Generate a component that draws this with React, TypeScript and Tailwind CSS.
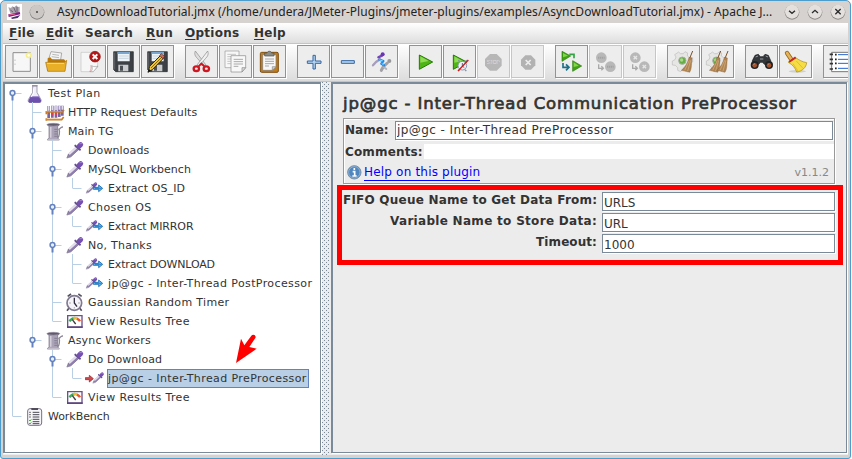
import React from "react";

/* ---------- toolbar drawings (99-unit canvas, three units per pixel) ---------- */

const NewIcon = () => (
  <g>
    <path d="M24 23h52v56H24z" fill="#f7f7f7" stroke="#8c8c8c" strokeWidth="3" />
    <path d="M30 44v3M30 56v3" stroke="#aaa" strokeWidth="3" />
    <circle cx="71" cy="31" r="9" fill="#f6ee8a" />
    <circle cx="71" cy="31" r="4" fill="#fffef0" />
  </g>
);

const OpenIcon = () => (
  <g>
    <path d="M29 42L36 20l32 4-4 26z" fill="#f4f4f4" stroke="#8a8a8a" strokeWidth="2" />
    <path d="M40 28l20 3M38 35l22 3" stroke="#9a9a9a" strokeWidth="2" />
    <path d="M26 40l8-3 5 6h36l5 6-4 28H25z" fill="#b9790c" />
    <path d="M20 52h56l7-6-5 33H26z" fill="#e9b027" stroke="#a86e0b" strokeWidth="2" />
    <path d="M24 55h51" stroke="#f8dc7e" strokeWidth="3" />
  </g>
);

const CloseIcon = () => (
  <g>
    <path d="M24 22h50v44L61 80H24z" fill="#f6f6f6" stroke="#c3c3c3" strokeWidth="2" />
    <path d="M52 80c8-4 6-13 4-18 7 5 14 3 19 1L61 80z" fill="#fff" stroke="#999" strokeWidth="2" />
    <path d="M50 80c5-7 5-14 3-19" fill="none" stroke="#a22" strokeWidth="1" />
    <circle cx="66" cy="35" r="16" fill="#b51717" stroke="#8d0e0e" strokeWidth="2" />
    <path d="M59 28l14 14M73 28L59 42" stroke="#fff" strokeWidth="6" />
  </g>
);

const Floppy = () => (
  <g>
    <path d="M20 20h59v60H26l-6-6z" fill="#3d4044" stroke="#232528" strokeWidth="2" />
    <path d="M32 21h36v28H32z" fill="#eef3f7" />
    <path d="M32 21h36v6H32z" fill="#79a7d0" />
    <path d="M35 33h30M35 40h30" stroke="#b5c5d2" strokeWidth="2" />
    <path d="M34 59h30v20H34z" fill="#c9cbcd" />
    <path d="M39 62h9v15h-9z" fill="#4a4e52" />
    <path d="M23 23v50" stroke="#73777b" strokeWidth="2" />
  </g>
);

const SaveAsIcon = () => (
  <g>
    <Floppy />
    <path d="M21 82l5-18 34-34 9 8-34 35z" fill="#f0c436" stroke="#2b2b1f" strokeWidth="3" />
    <path d="M30 69l34-34" stroke="#8a6b0d" strokeWidth="3" />
    <path d="M56 31l5-5 10 9-6 6z" fill="#d46c61" stroke="#4b1d19" strokeWidth="2" />
    <path d="M20 82l4-10 6 5z" fill="#111" />
  </g>
);

const CutIcon = () => (
  <g fill="none">
    <path d="M31 18c-4 10 0 16 6 22l21 24 5-4z" fill="#dedede" stroke="#8a8a8a" strokeWidth="2" />
    <path d="M68 18c4 10 0 16-6 22L41 64l-5-4z" fill="#f1f1f1" stroke="#8a8a8a" strokeWidth="2" />
    <ellipse cx="34" cy="71" rx="8" ry="7" stroke="#cf1722" strokeWidth="7" />
    <ellipse cx="64" cy="71" rx="8" ry="7" stroke="#cf1722" strokeWidth="7" />
    <path d="M41 64l8-8 9 8" stroke="#cf1722" strokeWidth="6" />
  </g>
);

const CopyIcon = () => (
  <g stroke="#999" strokeWidth="2" fill="#f8f8f8">
    <path d="M18 18h42v50H18z" />
    <path d="M25 28h26M25 35h20M25 42h12M25 49h10M25 56h10" stroke="#c4c4c4" strokeWidth="3" />
    <path d="M36 32h44v36L69 81H36z" stroke="#888" />
    <path d="M44 43h28M44 50h28M44 57h28M44 64h14" stroke="#aaa" strokeWidth="3" />
    <path d="M80 68H69v13z" fill="#ddd" stroke="#888" />
  </g>
);

const PasteIcon = () => (
  <g>
    <rect x="22" y="22" width="54" height="60" rx="4" fill="#bf7d1d" stroke="#81500f" strokeWidth="3" />
    <path d="M29 29h40v36L58 76H29z" fill="#f8f8f8" stroke="#777" strokeWidth="2" />
    <path d="M36 42h27M36 49h27M36 56h27M36 63h12" stroke="#a8a8a8" strokeWidth="3" />
    <path d="M69 65H58v11z" fill="#d3d3d3" stroke="#888" strokeWidth="2" />
    <path d="M35 33v-9h7c2-7 12-7 14 0h7v9z" fill="#898c87" stroke="#4e504c" strokeWidth="2" />
  </g>
);

const PlusIcon = () => (
  <path d="M48 31h7v17h17v7H55v17h-7V55H31v-7h17z" fill="#b3d2ee" stroke="#3465a4" strokeWidth="3" />
);

const MinusIcon = () => <path d="M31 47h39v8H31z" fill="#b3d2ee" stroke="#3465a4" strokeWidth="3" />;

const ToggleIcon = () => (
  <g strokeLinecap="round" strokeLinejoin="round" fill="none">
    <path d="M49 76l6-11 12-11" stroke="#a1a1a5" strokeWidth="9" />
    <path d="M56 66l8 6" stroke="#b4b4b8" strokeWidth="6" />
    <circle cx="73" cy="48" r="6" fill="#98989c" />
    <path d="M24 61l9-10 12-8" stroke="#a79dbd" strokeWidth="7" />
    <path d="M40 37l12-6" stroke="#7747b8" strokeWidth="7" />
    <circle cx="53" cy="28" r="6" fill="#6a35b4" />
    <path d="M43 44l12 4-6 8 8 5" stroke="#1d8aee" strokeWidth="7" />
    <path d="M44 45l8 2M51 56l4 3" stroke="#8cddff" strokeWidth="3" />
  </g>
);

const PlayShape = () => (
  <g>
    <path d="M31 30l40 21-40 22z" fill="#4fb416" stroke="#257808" strokeWidth="3" strokeLinejoin="round" />
    <path d="M34 34l25 14-25 5z" fill="#8edb54" />
  </g>
);

const PlayNoTimerIcon = () => (
  <g>
    <PlayShape />
    <circle cx="58" cy="62" r="13" fill="#f0f4fa" stroke="#8795ad" strokeWidth="3" />
    <path d="M50 50l-4-4M67 50l4-4M49 74l-3 4M66 74l4 4" stroke="#8090a8" strokeWidth="4" />
    <path d="M58 54v9l6 5" fill="none" stroke="#667" strokeWidth="3" />
    <path d="M45 78l31-33" stroke="#d01818" strokeWidth="4" />
  </g>
);

const StopIcon = () => (
  <g>
    <path d="M39 27h20l15 15v20L59 77H39L24 62V42z" fill="#b7b7b7" />
    <text x="49" y="58" textAnchor="middle" fontSize="17" fontWeight="bold" fill="#e0e0e0" stroke="#999" strokeWidth=".5" fontFamily="Liberation Sans, sans-serif" textLength="40">STOP</text>
  </g>
);

const ShutdownIcon = () => (
  <g>
    <path d="M43 31h17l13 13v17L60 74H43L30 61V44z" fill="#b2b2b2" />
    <path d="M44 45l15 15M59 45L44 60" stroke="#ececec" strokeWidth="5" />
  </g>
);

const RemoteStartIcon = () => (
  <g>
    <path d="M21 19l26 14-26 16z" fill="#3fa414" stroke="#257808" strokeWidth="2" />
    <path d="M24 24l15 8-15 5z" fill="#83d64a" />
    <path d="M53 47l27 16-27 16z" fill="#3fa414" stroke="#257808" strokeWidth="2" />
    <path d="M56 52l15 10-15 4z" fill="#83d64a" />
    <path d="M24 54v13h16M33 58l9 9-9 9" fill="none" stroke="#1d7187" strokeWidth="5" />
    <path d="M43 28h14v12" fill="none" stroke="#32a344" strokeWidth="5" />
  </g>
);

const RemoteDots = ({ cross }: { cross?: boolean }) => (
  <g>
    <circle cx="37" cy="38" r="16" fill="#b8b8b8" />
    <circle cx="64" cy="65" r="16" fill="#b8b8b8" />
    {cross ? (
      <path d="M32 33l10 10M42 33L32 43M59 60l10 10M69 60L59 70" stroke="#e6e6e6" strokeWidth="4" />
    ) : (
      <path d="M27 38h20M54 65h20" stroke="#a2a2a2" strokeWidth="6" strokeDasharray="4 2" />
    )}
    <path d="M29 58v12h14M37 64l6 6-6 6" fill="none" stroke="#a9a9a9" strokeWidth="4" />
  </g>
);

const Gear = () => (
  <g>
    <path d="M35 21l5 5h9l5-6 8 4-1 9 7 5h9v13l-8 3-2 9 4 8-9 7-8-5-8 1-5 6-9-4v-8l-7-7-9-1V48l8-4 3-8-4-7z" fill="#e6e6e4" stroke="#bbb" strokeWidth="2" />
    <circle cx="46" cy="47" r="11" fill="#67ad45" stroke="#aaa" strokeWidth="3" />
    <circle cx="44" cy="45" r="5" fill="#a9da8c" />
  </g>
);

const Broom = () => (
  <g>
    <path d="M77 18L68 40" stroke="#7a4e22" strokeWidth="3" />
    <path d="M66 37l9 2c-2 15 0 33-7 43l-25-6c12-10 19-22 23-39z" fill="#b08352" stroke="#7c5327" strokeWidth="1" />
    <path d="M67 46L53 76M71 46L62 78" stroke="#d8b483" strokeWidth="2" />
  </g>
);

const ClearIcon = () => (
  <g>
    <Gear />
    <Broom />
  </g>
);

const ClearAllIcon = () => (
  <g>
    <Gear />
    <g transform="translate(-18 0)">
      <Broom />
    </g>
    <g transform="translate(4 0)">
      <Broom />
    </g>
  </g>
);

const SearchIcon = () => (
  <g>
    <path d="M30 31l10-3 6 7h8l6-7 10 3 8 18-16 12-10-9h-5l-10 9-16-12z" fill="#34373a" stroke="#1c1e20" strokeWidth="2" />
    <circle cx="29" cy="60" r="12" fill="#202224" />
    <circle cx="72" cy="60" r="12" fill="#202224" />
    <circle cx="29" cy="61" r="7" fill="#a5522d" />
    <circle cx="72" cy="61" r="7" fill="#a5522d" />
    <path d="M32 36l7-3M62 33l7 3M45 42h10" stroke="#989da2" strokeWidth="3" />
    <path d="M25 59l5-3M68 59l5-3" stroke="#e4a27d" strokeWidth="2" />
  </g>
);

const ResetSearchIcon = () => (
  <g>
    <ellipse cx="55" cy="79" rx="26" ry="4" fill="#cfcfcf" />
    <path d="M24 24l12 18" stroke="#9c6614" strokeWidth="13" strokeLinecap="round" />
    <path d="M24 24l12 18" stroke="#e2b45b" strokeWidth="8" strokeLinecap="round" />
    <path d="M28 52l22-14c10 7 20 13 33 15-1 13-13 26-30 28-4-12-12-22-25-29z" fill="#f6dd45" stroke="#a78509" strokeWidth="2" />
    <path d="M42 56l15 22M52 48l20 22" stroke="#d4b01c" strokeWidth="2" />
    <path d="M30 51l20-14" stroke="#c92323" strokeWidth="6" />
  </g>
);

const FunctionIcon = () => (
  <g>
    <path d="M26 22h75v58H26z" fill="#fff" stroke="#777" strokeWidth="3" />
    <path d="M20 28h10M20 43h10M20 56h10M20 72h10" stroke="#333" strokeWidth="5" />
    <path d="M36 29h5M36 43h5M36 55h5M36 70h5" stroke="#222" strokeWidth="5" />
    <path d="M45 29h40M45 43h40M45 55h40M45 70h40" stroke="#2564cf" strokeWidth="3" />
  </g>
);

type Tool = { icon: React.ReactNode; label: string; disabled?: boolean };

const toolGroups: Tool[][] = [
  [
    { icon: <NewIcon />, label: "New" },
    { icon: <OpenIcon />, label: "Open" },
    { icon: <CloseIcon />, label: "Close" },
    { icon: <Floppy />, label: "Save" },
    { icon: <SaveAsIcon />, label: "Save As" },
  ],
  [
    { icon: <CutIcon />, label: "Cut" },
    { icon: <CopyIcon />, label: "Copy" },
    { icon: <PasteIcon />, label: "Paste" },
  ],
  [
    { icon: <PlusIcon />, label: "Expand All" },
    { icon: <MinusIcon />, label: "Collapse All" },
    { icon: <ToggleIcon />, label: "Toggle" },
  ],
  [
    { icon: <PlayShape />, label: "Start" },
    { icon: <PlayNoTimerIcon />, label: "Start no pauses" },
    { icon: <StopIcon />, label: "Stop", disabled: true },
    { icon: <ShutdownIcon />, label: "Shutdown", disabled: true },
  ],
  [
    { icon: <RemoteStartIcon />, label: "Remote Start All" },
    { icon: <RemoteDots />, label: "Remote Stop All", disabled: true },
    { icon: <RemoteDots cross />, label: "Remote Shutdown All", disabled: true },
  ],
  [
    { icon: <ClearIcon />, label: "Clear" },
    { icon: <ClearAllIcon />, label: "Clear All" },
  ],
  [
    { icon: <SearchIcon />, label: "Search" },
    { icon: <ResetSearchIcon />, label: "Reset Search" },
  ],
  [{ icon: <FunctionIcon />, label: "Function Helper" }],
];

const ToolButton = ({ icon, label, disabled }: Tool) => (
  <button
    aria-label={label}
    disabled={disabled}
    className={`h-[33px] w-[33px] shrink-0 border bg-[#ededed] shadow-[1px_1px_0_#fff] ${disabled ? "border-[#c6c6c6]" : "border-[#929292]"}`}
  >
    <svg className="block h-[31px] w-[31px]" viewBox="3 3 93 93">
      {icon}
    </svg>
  </button>
);

/* ---------- tree drawings (60 x 57 units) ---------- */

const FlaskIcon = () => (
  <g>
    <path d="M23 6h13v19l12 22c2 5-1 9-5 9H15c-4 0-7-4-5-9l13-22z" fill="#efedf6" stroke="#77718a" strokeWidth="2" />
    <path d="M17 37h24l7 12c1 4-2 7-5 7H15c-4 0-6-4-4-8z" fill="#6d4fae" />
    <path d="M16 38h26" stroke="#a994d6" strokeWidth="3" />
    <path d="M21 5h17" stroke="#9791a8" strokeWidth="4" />
    <path d="M26 13v14l-7 12" stroke="#fff" strokeWidth="3" fill="none" />
  </g>
);

const RackIcon = () => (
  <g>
    <path d="M11 9v36M22 8v36M33 8v36M43 8v34M52 8v30" stroke="#7764a2" strokeWidth="8" />
    <path d="M11 9v14M22 8v14M33 8v14M43 8v12M52 8v12" stroke="#e2deee" strokeWidth="5" />
    <path d="M22 24v14M33 24v14" stroke="#dc3c68" strokeWidth="6" />
    <path d="M2 27h50l5-6M2 50h48l6-8M4 24v10M4 46v7" stroke="#c97a23" strokeWidth="5" fill="none" />
    <path d="M3 25h48M3 48h46" stroke="#efb66a" strokeWidth="1.5" />
  </g>
);

const MugIcon = () => (
  <g>
    <path d="M41 20c5 8 1 26-3 28M42 22c5-1 4-8 12-7" fill="none" stroke="#8e8798" strokeWidth="4" />
    <path d="M8 8l4 6v33l-5 7h36l-5-7V14l4-6z" fill="#aaa2b6" stroke="#6f687b" strokeWidth="2" />
    <path d="M17 15v32" stroke="#d5cfdd" strokeWidth="5" />
    <path d="M28 22h9M28 29h9M28 36h9M28 43h9" stroke="#736b80" strokeWidth="2" />
    <ellipse cx="25" cy="8" rx="19" ry="4" fill="#615a6b" stroke="#8c8498" strokeWidth="2" />
    <path d="M8 52h34" stroke="#cbc5d2" strokeWidth="3" />
  </g>
);

const Pipette = () => (
  <g strokeLinecap="round">
    <path d="M6 50l4-10 26-25 8 8-26 24z" fill="#8f84a6" stroke="#766a8e" strokeWidth="2" strokeLinejoin="round" />
    <path d="M14 38l21-19" stroke="#e4deee" strokeWidth="6" />
    <path d="M14 45L36 25" stroke="#9277bd" strokeWidth="2" />
    <path d="M31 14l14 12" stroke="#66508f" strokeWidth="6" />
    <path d="M43 15l4-4" stroke="#7650b0" strokeWidth="15" />
    <path d="M45 8l5-1" stroke="#9b7bcb" strokeWidth="4" />
  </g>
);

const SmallPipette = ({ x }: { x: number }) => (
  <g transform={`translate(${x} 8) scale(.67)`}>
    <Pipette />
  </g>
);

const ExtractIcon = () => (
  <g>
    <SmallPipette x={0} />
    <path d="M25 25h16v-7l12 10-12 10v-7H25z" fill="#62baf0" stroke="#1269b4" strokeWidth="2.5" />
    <path d="M30 28h20" stroke="#1269b4" strokeWidth="2" />
  </g>
);

const PreIcon = () => (
  <g>
    <path d="M1 26h12v-7l12 10-12 10v-7H1z" fill="#cf4a50" stroke="#9a3036" strokeWidth="2.5" />
    <SmallPipette x={20} />
  </g>
);

const ClockIcon = () => (
  <g>
    <path d="M8 10l10-7M40 3l10 7M12 45l-6 8M44 45l6 8" stroke="#55515e" strokeWidth="5" />
    <circle cx="28" cy="30" r="22" fill="#f5f4f8" stroke="#807990" strokeWidth="5" />
    <path d="M28 14v16l8 11" fill="none" stroke="#332f40" strokeWidth="4" />
    <path d="M13 30h4M40 30h4M28 46v-3" stroke="#888" strokeWidth="3" />
  </g>
);

const ResultsIcon = () => (
  <g>
    <path d="M8 11h43v35H8z" fill="#fff" stroke="#68518c" strokeWidth="4" />
    <path d="M6 45h47" stroke="#5b457d" strokeWidth="5" />
    <path d="M13 28c7-9 13-10 17-10" stroke="#3aab56" strokeWidth="7" fill="none" />
    <path d="M25 19c4-2 8-1 12 1" stroke="#f0b93a" strokeWidth="7" fill="none" />
    <path d="M36 20c4 2 7 4 9 8" stroke="#e3573c" strokeWidth="7" fill="none" />
    <path d="M22 23l10 13" stroke="#3d3d3d" strokeWidth="4" />
  </g>
);

const WorkbenchIcon = () => (
  <g>
    <rect x="8" y="5" width="42" height="50" rx="7" fill="#f6f5f8" stroke="#777084" strokeWidth="3" />
    <path d="M19 3h20v6H19z" fill="#514c59" />
    <path d="M23 16h20M23 23h20M23 30h20M23 37h20M23 44h20M23 50h20" stroke="#4b4952" strokeWidth="3" />
    <path d="M12 16h6M12 23h6M12 30h6" stroke="#777" strokeWidth="3" />
    <path d="M12 39l3 3 4-5M12 48l3 3 4-5" fill="none" stroke="#4eac3c" strokeWidth="3" />
  </g>
);

/* ---------- test plan tree ---------- */

const indents = ["pl-[20px]", "pl-[40px]", "pl-[60px]", "pl-[80px]"];

type Node = { level: number; text: string; track: string; icon: React.ReactNode; open?: boolean; selected?: boolean };

const nodes: Node[] = [
  { level: 0, text: "Test Plan", track: "tracking-[0.45px]", icon: <FlaskIcon />, open: true },
  { level: 1, text: "HTTP Request Defaults", track: "tracking-[0.18px]", icon: <RackIcon /> },
  { level: 1, text: "Main TG", track: "tracking-[0.08px]", icon: <MugIcon />, open: true },
  { level: 2, text: "Downloads", track: "tracking-[0.1px]", icon: <Pipette /> },
  { level: 2, text: "MySQL Workbench", track: "tracking-[0px]", icon: <Pipette />, open: true },
  { level: 3, text: "Extract OS_ID", track: "tracking-[0.1px]", icon: <ExtractIcon /> },
  { level: 2, text: "Chosen OS", track: "tracking-[0.4px]", icon: <Pipette />, open: true },
  { level: 3, text: "Extract MIRROR", track: "tracking-[-0.13px]", icon: <ExtractIcon /> },
  { level: 2, text: "No, Thanks", track: "tracking-[0.25px]", icon: <Pipette />, open: true },
  { level: 3, text: "Extract DOWNLOAD", track: "tracking-[-0.15px]", icon: <ExtractIcon /> },
  { level: 3, text: "jp@gc - Inter-Thread PostProcessor", track: "tracking-[0.39px]", icon: <ExtractIcon /> },
  { level: 2, text: "Gaussian Random Timer", track: "tracking-[0.33px]", icon: <ClockIcon /> },
  { level: 2, text: "View Results Tree", track: "tracking-[0.36px]", icon: <ResultsIcon /> },
  { level: 1, text: "Async Workers", track: "tracking-[0.16px]", icon: <MugIcon />, open: true },
  { level: 2, text: "Do Download", track: "tracking-[0.06px]", icon: <Pipette />, open: true },
  { level: 3, text: "jp@gc - Inter-Thread PreProcessor", track: "tracking-[0.4px]", icon: <PreIcon />, selected: true },
  { level: 2, text: "View Results Tree", track: "tracking-[0.36px]", icon: <ResultsIcon /> },
  { level: 0, text: "WorkBench", track: "tracking-[-0.05px]", icon: <WorkbenchIcon /> },
];

/* Guide lines: each vertical run joins the first and last child of a node. */
const runs = [
  [7.5, 12, 332],
  [27.5, 19, 256],
  [47.5, 57, 237],
  [67.5, 95, 104],
  [67.5, 133, 142],
  [67.5, 171, 199],
  [47.5, 266, 313],
  [67.5, 285, 294],
];

const Guides = () => (
  <svg className="pointer-events-none absolute left-0 top-0" width="120" height="342" viewBox="0 0 120 342" fill="none">
    {runs.map(([x, y1, y2]) => (
      <path key={`${x}-${y1}`} d={`M${x} ${y1 - 1}V${y2}`} stroke="#b8cfe5" />
    ))}
    {nodes.map((n, i) => {
      const x = 7.5 + n.level * 20;
      const y = i * 19 + 9.5;
      return (
        <g key={i}>
          <path d={`M${x} ${y}h9`} stroke="#b8cfe5" />
          {n.open && (
            <>
              <path d={`M${x} ${y + 1}v6`} stroke="#6382bf" strokeWidth="2" />
              <circle cx={x} cy={y - 0.5} r="2.4" fill="#e8f0f8" stroke="#6382bf" strokeWidth="1.5" />
            </>
          )}
        </g>
      );
    })}
  </svg>
);

const Tree = () => (
  <div className="relative h-[371px] w-[318px] shrink-0 border-l-2 border-t-2 border-r border-b border-[#7a8a99] bg-white shadow-[1px_1px_0_#fff]">
    <Guides />
    {nodes.map((n, i) => (
      <div key={i} className={`flex h-[19px] items-center ${indents[n.level]}`}>
        <svg className="h-[19px] w-[20px] shrink-0" viewBox="0 0 60 57">
          {n.icon}
        </svg>
        <span
          className={`ml-[2px] h-[19px] whitespace-nowrap border text-[11px] leading-[17px] ${n.track} ${
            n.selected ? "w-[202px] border-[#6382bf] bg-[#b8cfe5]" : "border-transparent"
          }`}
        >
          {n.text}
        </span>
      </div>
    ))}
    <svg className="absolute left-[230px] top-[249px]" width="26" height="34" viewBox="0 0 78 102">
      <path d="M3 90L18 17l10 20L49 8c6-6 16 0 12 7L43 42l22 5z" fill="#f00" />
    </svg>
  </div>
);

/* ---------- configuration panel ---------- */

const inputClass =
  "h-[19px] min-w-0 border border-[#7a8a99] bg-white text-[12px] text-[#333] shadow-[inset_-1px_-1px_0_#fff,1px_1px_0_#fff] outline-none";

const params = [
  { label: "FIFO Queue Name to Get Data From:", track: "tracking-[0.22px]", value: "URLS" },
  { label: "Variable Name to Store Data:", track: "tracking-[0.3px]", value: "URL" },
  { label: "Timeout:", track: "tracking-[0.08px]", value: "1000" },
];

const InfoIcon = () => (
  <svg className="h-[15px] w-[15px]" viewBox="0 0 45 45">
    <circle cx="22" cy="22" r="20" fill="#4f86bd" stroke="#7c8ea3" strokeWidth="3" />
    <circle cx="22" cy="22" r="17" fill="none" stroke="#a9c6e2" strokeWidth="2" />
    <path d="M22 9v6M17 20h6v13M16 33h13" fill="none" stroke="#fff" strokeWidth="5" />
  </svg>
);

const Panel = () => (
  <main className="relative h-[371px] w-[516px] shrink-0 border-l-2 border-t-2 border-r border-b border-[#7a8a99] bg-[#ececec] pl-[10px] pr-[11px] shadow-[1px_1px_0_#fff]">
    <h1 className="mt-[11px] h-[17px] whitespace-nowrap text-[16.5px] font-normal leading-[17px] tracking-[0.86px] [-webkit-text-stroke:0.7px_#333]">
      jp@gc - Inter-Thread Communication PreProcessor
    </h1>
    <section className="mt-[6px] h-[66px] w-[492px] border border-[#999] shadow-[1px_1px_0_#fff,inset_1px_1px_0_#fff]">
      <div className="flex h-[21px] items-center pl-px pr-px pt-px text-[12px]">
        <label className="w-[50px] shrink-0 font-bold">Name:</label>
        <input className={`${inputClass} flex-1 pl-px tracking-[0.43px]`} defaultValue="jp@gc - Inter-Thread PreProcessor" />
      </div>
      <div className="mt-[4px] flex h-[15px] items-center pl-px text-[12px]">
        <label className="w-[79px] shrink-0 font-bold tracking-[0.15px]">Comments:</label>
        <input className="h-[15px] min-w-0 flex-1 bg-white" />
      </div>
      <div className="flex h-[24px] items-center pl-[3px] pr-[5px] pt-[3px]">
        <InfoIcon />
        <a className="ml-[2px] h-[16px] border-b border-[#00f] text-[12px] leading-[15px] tracking-[0.19px] text-[#00f]">
          Help on this plugin
        </a>
        <span className="ml-auto pt-px text-[11px] leading-[18px] text-[#888]">v1.1.2</span>
      </div>
    </section>
    <section className="mt-[8px] flex flex-col gap-[2px]">
      {params.map((p) => (
        <div key={p.label} className="flex h-[19px] w-[492px] items-center">
          <label className={`-mt-[3px] w-[254px] shrink-0 whitespace-nowrap text-right text-[12px] font-bold leading-[16px] ${p.track}`}>
            {p.label}
          </label>
          <input className={`${inputClass} ml-[5px] flex-1 pl-px pt-[2px]`} defaultValue={p.value} />
        </div>
      ))}
    </section>
    <div className="pointer-events-none absolute left-[4px] top-[101px] h-[80px] w-[506px] border-[5px] border-[#f00]" />
  </main>
);

/* ---------- window ---------- */

const WindowButton = ({ d }: { d: string }) => (
  <svg className="h-[16px] w-[16px]" viewBox="0 0 48 48">
    <circle cx="24" cy="25" r="22" fill="#8d8a87" />
    <circle cx="24" cy="23" r="21" fill="#e3e0de" />
    <path d={d} fill="none" stroke="#2d2d2d" strokeWidth="4" />
  </svg>
);

const menus = [
  { text: "File", width: "w-[37px]" },
  { text: "Edit", width: "w-[39px]" },
  { text: "Search", width: "w-[61px]" },
  { text: "Run", width: "w-[39px]" },
  { text: "Options", width: "w-[69px]" },
  { text: "Help", width: "w-[40px]" },
];

export default function App() {
  return (
    <div className="h-[459px] w-[852px] overflow-hidden bg-white font-['DejaVu_Sans',sans-serif] text-[#333]">
      <div className="flex h-[459px] w-[851px] flex-col overflow-hidden rounded-t-[5px] rounded-b-[3px] border border-[#4a9dcc] bg-[#d6d2d0]">
        <header className="flex h-[22px] shrink-0 items-center pl-[6px] pr-[5px]">
          <svg className="h-[16px] w-[15px] shrink-0" viewBox="0 0 45 48">
            <path d="M0 0h45v48H0z" fill="#fff" />
            <path d="M4 10l8 2 4-5 6 3 6-6 4 5 6-1v20H10z" fill="#a9a4ad" />
            <path d="M10 18l8 6M20 10l6 14M30 8v18" stroke="#6d6273" strokeWidth="3" />
            <path d="M4 31l34-7 2 7-35 8z" fill="#811b83" />
            <path d="M12 41l28-8-8 9-17 3z" fill="#4b2d6c" />
            <path d="M5 33l20-3" stroke="#e76a9a" strokeWidth="3" />
          </svg>
          <svg className="ml-[7px] h-[16px] w-[16px] shrink-0" viewBox="0 0 48 48">
            <circle cx="24" cy="25" r="22" fill="#868380" />
            <circle cx="24" cy="23" r="21" fill="#cbc8c6" />
            <circle cx="24" cy="24" r="3" fill="#444" />
          </svg>
          <span className="ml-[12px] w-[720px] shrink-0 whitespace-pre font-['Noto_Sans',sans-serif] text-[12px] leading-[20px] tracking-[0.045px] text-[#222]">
            AsyncDownloadTutorial.jmx (/home/undera/JMeter-Plugins/jmeter-plugins/examples/AsyncDownloadTutorial.jmx) - Apache J...
          </span>
          <div className="ml-[7px] flex shrink-0 gap-[7px]">
            <WindowButton d="M15 20l9 8 9-8" />
            <WindowButton d="M15 27l9-8 9 8" />
            <WindowButton d="M16 15l16 16M32 15L16 31" />
          </div>
        </header>
        <div className="relative flex grow flex-col pl-[2px] pr-[2px]">
          <nav className="flex h-[20px] shrink-0 items-center bg-linear-to-b from-white to-[#dedede] pl-[6px] text-[12px] font-bold tracking-[0.25px]">
            {menus.map(({ text, width }) => (
              <span key={text} className={width}>
                {text === "Search" ? text : (
                  <>
                    <u className="underline-offset-2">{text[0]}</u>
                    {text.slice(1)}
                  </>
                )}
              </span>
            ))}
          </nav>
          <div className="h-[39px] shrink-0 overflow-hidden border-t border-b border-[#c4c4c4] bg-linear-to-b from-white to-[#dcdcdc]">
            <div className="flex gap-[11px] pl-[2px] pt-px">
              {toolGroups.map((g, i) => (
                <div key={i} className="flex gap-px">
                  {g.map((t) => (
                    <ToolButton key={t.label} {...t} />
                  ))}
                </div>
              ))}
            </div>
          </div>
          <div className="flex h-[373px] shrink-0 bg-[#ececec]">
            <Tree />
            <div className="mx-px w-[8px] bg-[radial-gradient(circle_at_0.5px_0.5px,#7a8a99_0.5px,transparent_0.6px),radial-gradient(circle_at_2.5px_2.5px,#7a8a99_0.5px,transparent_0.6px)] bg-[size:4px_4px]" />
            <Panel />
          </div>
        </div>
      </div>
    </div>
  );
}
